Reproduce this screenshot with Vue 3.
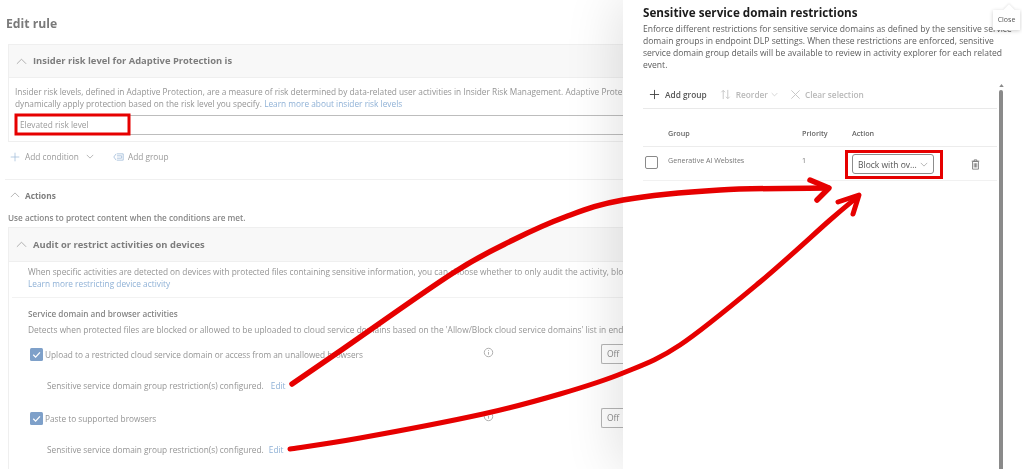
<script setup>
const activities = [
  { label: 'Upload to a restricted cloud service domain or access from an unallowed browsers', gap: 'edit-a' },
  { label: 'Paste to supported browsers', gap: 'edit-b' },
]
</script>

<template>
  <div class="screen">
    <main class="page">
      <h1 class="page-title">Edit rule</h1>

      <section class="card card-first">
        <header class="card-head">
          <svg class="chev-lg" viewBox="0 0 12 7"><path d="M1 6l5-5 5 5" /></svg>
          <h2>Insider risk level for Adaptive Protection is</h2>
        </header>
        <div class="card-body">
          <p class="copy">Insider risk levels, defined in Adaptive Protection, are a measure of risk determined by data-related user activities in Insider Risk Management. Adaptive Prote</p>
          <p class="copy">dynamically apply protection based on the risk level you specify. <a>Learn more about insider risk levels</a></p>
          <div class="risk-input">Elevated risk level</div>
        </div>
      </section>

      <div class="add-row">
        <span class="add-item">
          <svg class="ico-plus" viewBox="0 0 14 14"><path d="M7 1v12M1 7h12" /></svg>
          Add condition
          <svg class="chev-sm" viewBox="0 0 10 6"><path d="M1 1l4 4 4-4" /></svg>
        </span>
        <span class="add-item add-group">
          <svg class="ico-group" viewBox="0 0 14 10"><path d="M5 1h8v8H5M5 3.5h6v3H5M4 1L1 5l3 4" /></svg>
          Add group
        </span>
      </div>

      <div class="actions-head">
        <svg class="chev-md" viewBox="0 0 12 7"><path d="M1 6l5-5 5 5" /></svg>
        <strong>Actions</strong>
      </div>
      <p class="actions-copy">Use actions to protect content when the conditions are met.</p>

      <section class="card card-second">
        <header class="card-head">
          <svg class="chev-lg" viewBox="0 0 12 7"><path d="M1 6l5-5 5 5" /></svg>
          <h2>Audit or restrict activities on devices</h2>
        </header>
        <div class="intro">
          <p class="copy">When specific activities are detected on devices with protected files containing sensitive information, you can choose whether to only audit the activity, blo</p>
          <p class="copy"><a>Learn more restricting device activity</a></p>
        </div>
        <div class="activity">
          <h3>Service domain and browser activities</h3>
          <p class="copy detect">Detects when protected files are blocked or allowed to be uploaded to cloud service domains based on the 'Allow/Block cloud service domains' list in end</p>
          <div v-for="item in activities" :key="item.label" class="activity-item" :class="item.gap">
            <div class="check-row">
              <span class="check">
                <svg viewBox="0 0 12 12"><path d="M3 6.2l2.2 2.2L9.2 4" /></svg>
              </span>
              <span class="check-label">{{ item.label }}</span>
              <svg class="info" viewBox="0 0 12 12">
                <circle cx="6" cy="6" r="4.6" />
                <path d="M6 5.4v3M6 3.4v.9" />
              </svg>
              <span class="off-btn">Off</span>
            </div>
            <p class="configured">Sensitive service domain group restriction(s) configured. <a class="edit">Edit</a></p>
          </div>
        </div>
      </section>
    </main>

    <aside class="panel">
      <h2 class="panel-title">Sensitive service domain restrictions</h2>
      <p class="panel-copy">Enforce different restrictions for sensitive service domains as defined by the sensitive service</p>
      <p class="panel-copy">domain groups in endpoint DLP settings. When these restrictions are enforced, sensitive</p>
      <p class="panel-copy">service domain group details will be available to review in activity explorer for each related</p>
      <p class="panel-copy">event.</p>

      <div class="toolbar">
        <span class="tool tool-on">
          <svg viewBox="0 0 12 12"><path d="M6 1v10M1 6h10" /></svg>
          Add group
        </span>
        <span class="tool tool-off">
          <svg viewBox="0 0 12 12"><path d="M3.5 11V1.5M1.5 3.5l2-2 2 2M8.5 1v9.500M6.500 8.500l2 2 2-2" /></svg>
          Reorder
          <svg class="chev-tool" viewBox="0 0 10 6"><path d="M1 1l4 4 4-4" /></svg>
        </span>
        <span class="tool tool-off tool-clear">
          <svg viewBox="0 0 12 12"><path d="M1.500 1.500l9 9M10.500 1.500l-9 9" /></svg>
          Clear selection
        </span>
      </div>

      <div class="table-head">
        <span class="col-group">Group</span>
        <span class="col-priority">Priority</span>
        <span class="col-action">Action</span>
      </div>
      <div class="table-row">
        <span class="row-check"></span>
        <span class="col-group row-name">Generative AI Websites</span>
        <span class="col-priority row-name">1</span>
        <span class="select">
          <span>Block with ov...</span>
          <svg viewBox="0 0 10 6"><path d="M1 1l4 4 4-4" /></svg>
        </span>
        <svg class="trash" viewBox="0 0 10 13">
          <path d="M1.500 3h7v9h-7zM0.500 2.500h9M3.500 2.500V1h3v1.500M3.500 5v5M5 5v5M6.500 5v5" />
        </svg>
      </div>

      <div class="scrollbar">
        <svg viewBox="0 0 6 4"><path d="M3 0l3 4H0z" /></svg>
        <span class="thumb"></span>
      </div>
    </aside>

    <div class="tooltip">Close</div>

    <svg class="marks" viewBox="0 0 1022 469">
      <rect x="16" y="115" width="113" height="19" />
      <rect x="846.500" y="151.500" width="95" height="26" />
      <path class="line-a" d="M292 384C300 378.500 313.200 369.500 340 351C366.800 332.500 424.200 291.500 453 273C481.800 254.500 494.300 249.300 513 240C531.700 230.700 546.700 223.700 565 217C583.300 210.300 597.200 204.500 623 200C648.800 195.500 685.800 192 720 190C754.200 188 810 188.300 828 188" />
      <path class="line-a" d="M810 180L829 188L817 200" />
      <path class="line-b" d="M290 449C301.700 447.200 327.800 443.800 360 438C392.200 432.200 449.700 421.300 483 414C516.300 406.700 536.700 400.800 560 394C583.300 387.200 603 381.200 623 373C643 364.800 657.200 360.200 680 345C702.800 329.800 735 302.800 760 282C785 261.200 814 234 830 220C846 206 851.700 201.700 856 198" />
      <path class="line-b" d="M838 202L859 195L853 214" />
    </svg>
  </div>
</template>

<style>
html, body { margin: 0; background: #fff; }
</style>

<style scoped>
* { box-sizing: border-box; }
p, h1, h2, h3 { margin: 0; }
.screen {
  position: relative;
  width: 1022px;
  height: 469px;
  overflow: hidden;
  background: #fff;
  font-family: "Open Sans", "Liberation Sans", sans-serif;
  color: #8b8b8b;
  filter: blur(.3px);
}
.page { width: 623px; height: 469px; overflow: hidden; padding-left: 6px; }
.page-title {
  padding-top: 14px;
  font-size: 12.200px;
  line-height: 19px;
  font-weight: 700;
  color: #7a7a7a;
}
.card { margin-left: 2px; border: 1px solid #efefef; border-right: 0; }
.card-first { margin-top: 11px; height: 98px; }
.card-second { margin-top: 3px; height: 262px; }
.card-head {
  display: flex;
  align-items: center;
  gap: 6px;
  height: 33px;
  padding-left: 7px;
  background: #f8f8f8;
  border-bottom: 1px solid #efefef;
}
.card-second .card-head { height: 34px; }
.card-head h2 { font-size: 9.400px; line-height: 14px; font-weight: 700; color: #7d7d7d; white-space: nowrap; }
.chev-lg { width: 11px; height: 7px; }
.chev-md { width: 10px; height: 6px; }
svg path, svg circle { fill: none; stroke: #a8a8a8; stroke-width: 1; }
.card-body { padding: 8px 0 0 6px; }
.copy { font-size: 8.300px; line-height: 12px; white-space: nowrap; color: #949494; }
a { color: #8fb1d6; }
.risk-input {
  margin: 5px 0 0 0;
  height: 20px;
  padding-left: 5px;
  border-top: 1px solid #bdbdbd;
  border-bottom: 1px solid #bdbdbd;
  font-size: 8.300px;
  line-height: 18px;
  color: #9a9a9a;
}
.add-row {
  display: flex;
  align-items: center;
  height: 38px;
  padding-left: 5px;
  font-size: 8.300px;
  color: #9a9a9a;
  border-bottom: 1px solid #f0f0f0;
  margin-left: -1px;
  padding-bottom: 8px;
}
.add-item { display: flex; align-items: center; gap: 5px; }
.add-group { margin-left: 19px; gap: 4px; }
.ico-plus { width: 10px; height: 10px; }
.ico-plus path { stroke: #9db9d8; }
.ico-group { width: 11px; height: 8px; }
.ico-group path { stroke: #9db9d8; }
.chev-sm { width: 8px; height: 5px; margin-left: 2px; }
.actions-head {
  display: flex;
  align-items: center;
  gap: 5px;
  height: 12px;
  margin-top: 9px;
  padding-left: 4px;
  font-size: 8.300px;
  color: #7d7d7d;
}
.actions-copy {
  margin: 11px 0 0 2px;
  font-size: 8.200px;
  line-height: 12px;
  font-weight: 600;
  color: #868686;
}
.intro { height: 36px; margin-left: 3px; padding: 4px 0 0 16px; border-bottom: 1px solid #f2f2f2; }
.activity { padding: 10px 0 0 19px; }
.activity h3 { font-size: 8.200px; line-height: 12px; font-weight: 600; color: #868686; }
.detect { margin-top: 4px; font-size: 8.380px; }
.activity-item { margin-left: 2px; }
.edit-a { margin-top: 8px; }
.edit-b { margin-top: 16px; }
.check-row {
  display: grid;
  grid-template-columns: 15px 436px 16px 140px;
  align-items: center;
  height: 20px;
}
.check {
  display: block;
  width: 13px;
  height: 13px;
  border-radius: 1.500px;
  background: #7ea0c9;
}
.check svg { display: block; width: 13px; height: 13px; }
.check path { stroke: #fff; stroke-width: 1.200; }
.check-label { font-size: 8.280px; white-space: nowrap; color: #949494; }
.info { width: 11px; height: 11px; margin-left: 2px; margin-top: -4px; }
.off-btn {
  justify-self: end;
  width: 36px;
  height: 20px;
  font-size: 8.500px;
  line-height: 18px;
  padding-left: 5px;
  border: 1px solid #b5b5b5;
  border-right: 0;
  border-radius: 2px 0 0 2px;
}
.configured { margin: 16px 0 0 17px; font-size: 8.300px; line-height: 12px; white-space: nowrap; color: #949494; }
.edit { margin-left: 5px; }
.edit-b .edit { margin-left: 3px; }

.panel {
  position: absolute;
  top: 0;
  right: 0;
  bottom: 0;
  width: 399px;
  padding: 4px 25px 0 20px;
  background: #fff;
  box-shadow: -6px 0 50px rgba(0, 0, 0, .12);
  color: #555;
}
.panel-title { font-size: 11.700px; line-height: 17px; font-weight: 700; color: #1b1b1b; white-space: nowrap; }
.panel-copy { font-size: 8.550px; line-height: 12px; color: #5c5c5c; white-space: nowrap; }
.panel-title + .panel-copy { margin-top: 2px; }
.toolbar {
  display: flex;
  align-items: center;
  gap: 13px;
  height: 28px;
  margin-top: 10px;
  padding-left: 6px;
  border-bottom: 1px solid #e9e9e9;
  font-size: 8.300px;
  font-weight: 600;
}
.tool { display: flex; align-items: center; gap: 5px; }
.tool > svg:first-child { width: 11px; height: 11px; }
.tool-on { color: #555; }
.tool-on path { stroke: #444; }
.tool-off { color: #b8b8b8; }
.tool-off path { stroke: #c4c4c4; }
.tool-clear { margin-left: -1px; gap: 4px; }
.tool > .chev-tool { width: 7px; height: 5px; margin-left: -2px; }
.table-head {
  display: grid;
  grid-template-columns: 25px 134px 50px auto;
  align-items: center;
  height: 38px;
  padding-top: 10px;
  border-bottom: 1px solid #ececec;
  font-size: 7.200px;
  font-weight: 600;
  color: #666;
}
.col-group { grid-column: 2; }
.col-priority { grid-column: 3; }
.col-action { grid-column: 4; }
.table-row {
  display: grid;
  grid-template-columns: 25px 134px 50px 119px auto;
  align-items: center;
  height: 34px;
  border-bottom: 1px solid #f1f1f1;
}
.row-check { width: 13px; height: 13px; margin: -3px 0 0 2px; border: 1px solid #8a8a8a; border-radius: 2px; }
.row-name { font-size: 7.100px; color: #777; margin-top: -7px; }
.select {
  display: flex;
  align-items: center;
  justify-content: space-between;
  width: 82px;
  height: 20px;
  margin-top: 1px;
  padding: 0 5px 0 5px;
  border: 1px solid #8d8d8d;
  border-radius: 3px;
  font-size: 8.500px;
  color: #555;
}
.select svg { width: 8px; height: 5px; }
.trash { width: 9px; height: 11px; grid-column: 5; margin-top: 1px; }
.trash path { stroke: #777; }
.scrollbar {
  position: absolute;
  top: 84px;
  right: 19px;
  bottom: 0;
  width: 4px;
  display: flex;
  flex-direction: column;
  align-items: center;
  gap: 3px;
}
.scrollbar svg { width: 5px; height: 3px; }
.scrollbar path { fill: #8a8a8a; stroke: none; }
.thumb { flex: 1; width: 4px; border-radius: 2px 2px 0 0; background: #8a8a8a; }
.tooltip {
  position: absolute;
  top: 10px;
  left: 993px;
  width: 27px;
  height: 20px;
  background: #fff;
  box-shadow: 0 1px 4px rgba(0, 0, 0, .2);
  font-size: 7px;
  line-height: 20px;
  text-align: center;
  color: #555;
}
.tooltip::before {
  content: "";
  position: absolute;
  top: -4px;
  left: 12px;
  width: 8px;
  height: 8px;
  background: #fff;
  transform: rotate(45deg);
  box-shadow: -1px -1px 2px rgba(0, 0, 0, .08);
}
.marks { position: absolute; inset: 0; width: 1022px; height: 469px; pointer-events: none; }
.marks rect { fill: none; stroke: #e60000; stroke-width: 3; }
.marks path { fill: none; stroke: #e60000; stroke-linecap: round; stroke-linejoin: round; }
.marks .line-a { stroke-width: 5.500; }
.marks .line-b { stroke-width: 5; }
</style>
